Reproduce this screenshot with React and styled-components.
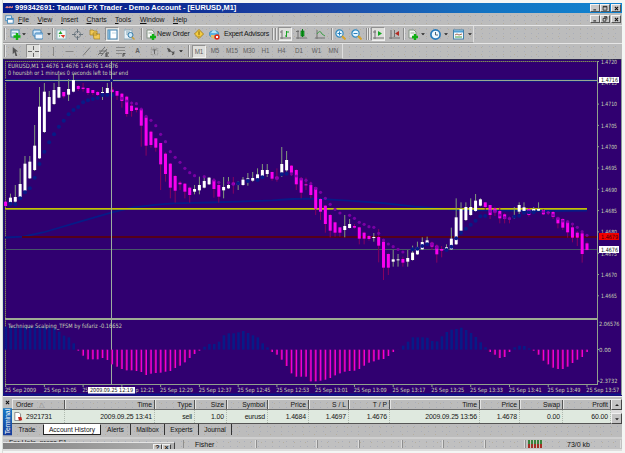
import React from 'react';
import styled, { createGlobalStyle, css } from 'styled-components';

const Global = createGlobalStyle`
  * { box-sizing: border-box; }
  body { margin: 0; background: #f4f6f4; font-family: "Liberation Sans", Arial, sans-serif; font-size: 7px; color: #141414; overflow: hidden; }
  svg { display: block; flex: none; }
`;

const Screen = styled.div`
  width: 625px; height: 453px; padding: 3px 3px 2px;
  background: linear-gradient(90deg, #f4f6f4 2px, #d8dcd8 2px, #d8dcd8 3px, #f4f6f4 3px);
`;
const Window = styled.div`
  width: 619px; height: 448px; display: flex; flex-direction: column; background: #bcbcbc; overflow: hidden;
`;
const dither = css`
  background-image: radial-gradient(circle, #a9adb9 0.6px, transparent 0.8px), radial-gradient(circle, #b5ae9e 0.6px, transparent 0.8px);
  background-size: 7px 5px, 11px 7px;
`;
const TitleBar = styled.header`
  height: 10px; display: flex; align-items: center; padding-left: 2px; flex: none;
  background: linear-gradient(90deg, #051c88 0%, #0c2a92 25%, #1f4aa8 52%, #1273c2 78%, #1084d0 100%);
  color: #fff; font-weight: bold; font-size: 7.4px; white-space: pre;
`;
const TitleText = styled.span`
  margin-left: 2px; line-height: 10px; letter-spacing: ${p => p.$ls}px;
`;
const WinButtons = styled.div`
  margin-left: auto; display: flex; padding-right: 1px;
`;
const WinButton = styled.span`
  width: 10px; height: 8px; margin-left: ${p => (p.$gap ? 1 : 0)}px; background: #c8c8c8; display: flex; align-items: center; justify-content: center;
  border: 1px solid; border-color: #f4f4f4 #555 #555 #f4f4f4;
`;
const MenuBar = styled.nav`
  height: 12px; display: flex; align-items: center; flex: none; padding-left: 2px; ${dither}
`;
const MenuItem = styled.span`
  width: ${p => p.$w}px; font-size: 6.9px; line-height: 11px;
  &::first-letter { text-decoration: underline; }
`;
const MenuLabels = styled.div`
  display: flex; margin-left: 4px;
`;
const Toolbar = styled.div`
  height: ${p => p.$h}px; flex: none; display: flex; align-items: center; border-top: 1px solid #e6e6e6; ${dither}
`;
const ToolGroup = styled.div`
  display: flex; align-items: center; height: 100%; border-right: 1px solid #dedede; border-bottom: 1px solid #9c9c9c;
`;
const Slot = styled.span`
  width: ${p => p.$w}px; height: 14px; flex: none; display: flex; align-items: center; justify-content: center;
  ${p => p.$pressed && css`background: #dededb; border: 1px solid; border-color: #929292 #f0f0f0 #f0f0f0 #929292;`}
`;
const Divider = styled.i`
  width: 2px; height: 12px; flex: none; margin: 0 ${p => p.$r || 0}px 0 ${p => p.$l || 0}px;
  border-left: 1px solid #8c8c8c; border-right: 1px solid #e4e4e4;
`;
const ToolLabel = styled.span`
  width: ${p => p.$w}px; flex: none; font-size: 7px; letter-spacing: ${p => p.$ls || 0}px; white-space: nowrap; line-height: 12px;
`;
const Period = styled.span`
  width: ${p => p.$w}px; height: 13px; flex: none; text-align: center; line-height: 12px; font-size: 6.3px; color: #606060;
  ${p => p.$pressed && css`background: #dededb; border: 1px solid; border-color: #929292 #f0f0f0 #f0f0f0 #929292; line-height: 11px;`}
`;
const ChartPane = styled.main`
  height: 337px; flex: none; background: #300070;
`;
const Terminal = styled.section`
  height: 39px; display: flex; flex: none; border-top: 1px solid #eee; background: #bcbcbc;
`;
const TerminalRail = styled.aside`
  width: 9px; display: flex; flex-direction: column; align-items: center; flex: none; padding-top: 2px;
`;
const RailTitle = styled.div`
  margin-top: 2px; width: 9px; flex: 1; color: #fff; font-size: 7px; line-height: 9px; writing-mode: vertical-rl; transform: rotate(180deg);
  background: linear-gradient(0deg, #1678c4, #163a98); padding: 1px 0; letter-spacing: -0.15px; white-space: nowrap;
`;
const Ledger = styled.div`
  flex: 1; display: flex; flex-direction: column; min-width: 0; padding-top: 2px;
`;
const TableBox = styled.div`
  display: flex; height: 25px; flex: none;
`;
const Rows = styled.div`
  width: 599px; flex: none;
`;
const cols = '53px 90px 40px 32px 41px 41px 40px 41px 90px 40px 43px 1fr';
const HeadRow = styled.div`
  display: grid; grid-template-columns: ${cols}; height: 11px; border-top: 1px solid #eee; border-bottom: 1px solid #707070;
`;
const HeadCell = styled.span`
  text-align: ${p => (p.$left ? 'left' : 'right')}; padding: 0 2px 0 3px; line-height: 9px; font-size: 6.8px; white-space: pre;
  border-right: 1px solid #555; border-left: 1px solid #e4e4e4; ${dither}
`;
const SortMark = styled.span`
  color: #8a8a8a; margin-left: 6px;
`;
const DataRow = styled.div`
  display: grid; grid-template-columns: ${cols}; height: 14px; background: #dfe9df; border-bottom: 1px solid #555;
`;
const DataCell = styled.span`
  display: flex; justify-content: ${p => (p.$left ? 'flex-start' : 'flex-end')}; align-items: center; gap: 3px;
  padding: 0 2px; border-right: 1px dotted #aeb8ae; font-size: 6.9px; letter-spacing: -0.12px; white-space: nowrap;
`;
const ScrollBar = styled.div`
  flex: 1; display: flex; flex-direction: column; background: #ddd; justify-content: space-between;
`;
const ScrollButton = styled.span`
  height: 11px; background: #c4c4c4; border: 1px solid; border-color: #f0f0f0 #444 #444 #f0f0f0; display: flex; align-items: center; justify-content: center;
`;
const Tabs = styled.div`
  height: 11px; display: flex; ${dither}
`;
const Tab = styled.span`
  width: ${p => p.$w}px; text-align: center; line-height: 11px; font-size: 6.6px; border-right: 1px solid ${p => (p.$bar ? '#333' : 'transparent')}; background-clip: padding-box;
  ${p => p.$active && css`background: #fff; border: 1px solid #222; border-top-color: #fff; line-height: 9px;`}
`;
const StatusBar = styled.footer`
  flex: 1; display: flex; margin-top: 2px; border-top: 2px solid #cfcfcf; background: #c0c0c0; border-bottom: 2px solid #dedede; overflow: hidden; ${dither}
`;
const HelpArea = styled.div`
  width: 172px; display: flex; flex-direction: column; overflow: hidden;
`;
const HelpText = styled.div`
  height: 3px; flex: none; overflow: hidden; padding-left: 6px; line-height: 8px; color: #222;
`;
const CoveringWindow = styled.div`
  flex: 1; min-height: 0; border-top: 1px solid #e4e4e4; border-right: 1px solid #444; display: flex; justify-content: flex-end;
  background: linear-gradient(90deg, #828282, #b0b0b0); padding: 1px 3px 0 0;
`;
const MiniButton = styled.span`
  width: 9px; height: 8px; background: #c4c4c4; border: 1px solid; border-color: #eee #444 #444 #eee; font-size: 7px; font-weight: bold; line-height: 6px; text-align: center;
`;
const StatusCell = styled.span`
  width: ${p => p.$w}px; padding-left: ${p => p.$pad || 0}px; flex: none; display: flex; align-items: center; margin: 1px 0; border-left: 1px solid #8e8e8e; border-right: 1px solid #dcdcdc; font-size: 7px; white-space: nowrap;
`;
const Traffic = styled.div`
  width: 15px; height: 8px; margin-right: 24px; background: repeating-linear-gradient(90deg, transparent 0 2px, #c5c5ba 2px 3px), linear-gradient(#37833a 0 45%, #a52d24 45%);
`;

const art = {
  newChart: <><rect x="1" y="1" width="8" height="7" fill="#e7f1f8" stroke="#4a86a8" /><path d="M2 4h5" stroke="#79a7c5" /><path d="M7 4v7M3.5 7.5h7" stroke="#13b313" strokeWidth="2.4" /></>,
  profiles: <><rect x="1" y="1" width="8" height="6" rx="1" fill="#d6eafa" stroke="#3f82b8" /><rect x="3" y="4" width="8" height="6" rx="1" fill="#eef7ff" stroke="#3f82b8" /><path d="M3.5 5h7" stroke="#4d95d0" /></>,
  market: <><rect x="1" y="1" width="9" height="9" fill="#f2f8f8" stroke="#90b8c0" /><path d="M2.5 5l2-3 2 3z" fill="#1ba526" /><path d="M4.5 6l3 3 1.5-3z" fill="#db3b25" /><path d="M3 7h1" stroke="#1ba526" /></>,
  data: <><circle cx="5.5" cy="5.5" r="3.2" fill="none" stroke="#7b858c" /><path d="M5.5 0v4M5.5 7v4M0 5.5h4M7 5.5h4" stroke="#68747c" /></>,
  navigator: <path d="M1 1h3l1 1h3v4H1zM4 4h3l1 1h3v5H5z" fill="#f0c957" stroke="#a27d1c" strokeWidth=".7" />,
  terminal: <><rect x="1" y="1" width="9" height="9" fill="#fff" stroke="#3c7fae" /><path d="M2.5 1v9" stroke="#63a4cf" strokeWidth="2" /><path d="M5 4h4" stroke="#bdd6e4" /></>,
  tester: <><rect x="0" y="1" width="8" height="9" fill="#e8f1f6" stroke="#90abba" /><path d="M2 3h4M2 5h3" stroke="#85a6b8" /><circle cx="6.5" cy="6" r="2.5" fill="#cbe8fa" stroke="#357aa6" /><path d="M8 8l2.5 2.5" stroke="#caa039" strokeWidth="1.5" /></>,
  order: <><path d="M1 1h5l2 2v6H1z" fill="#f4f7f4" stroke="#849384" /><path d="M2.5 4h4" stroke="#95a995" /><path d="M7 5v6M4 8h6" stroke="#0faf13" strokeWidth="2.4" /></>,
  alert: <><path d="M5.5 0.5l5 5-5 5-5-5z" fill="#f3cc42" stroke="#a67e16" /><path d="M5.5 2.5v4M5.5 7.5v1" stroke="#705200" /></>,
  expert: <><ellipse cx="5" cy="5" rx="4.7" ry="3.2" fill="#5ab2e2" stroke="#2b7aad" strokeWidth=".6" /><path d="M2 4q3-6 6 0z" fill="#b6e4f8" /><path d="M2 6h4l-1 4-3-2z" fill="#e7be62" /><circle cx="8" cy="8" r="2.7" fill="#dc2b18" /><rect x="7" y="7" width="2" height="2" fill="#fff" /></>,
  bars: <><path d="M2 1v9M0 3h2M0 9h11" stroke="#707070" /><path d="M6.5 2v6M5 7h2M7 3h2" stroke="#16a422" /></>,
  candle: <><path d="M2 1v9M0 2.5h3M0 9h11" stroke="#707070" /><rect x="5" y="2" width="3" height="5" fill="#14b523" stroke="#087515" strokeWidth=".7" /><path d="M6.5 0v8" stroke="#087515" /></>,
  line: <><path d="M2 1v9M0 9h10" stroke="#707070" /><path d="M2 5q3-5 5 0l3 2" fill="none" stroke="#3f9d48" /></>,
  zoomIn: <><circle cx="4.5" cy="4.5" r="3.6" fill="#e7f6ff" stroke="#318ac0" strokeWidth="1.2" /><path d="M7 7l3.5 3.5" stroke="#d8a22b" strokeWidth="2" /><path d="M2.5 4.5h4M4.5 2.5v4" stroke="#2680bd" /></>,
  zoomOut: <><circle cx="4.5" cy="4.5" r="3.6" fill="#e7f6ff" stroke="#318ac0" strokeWidth="1.2" /><path d="M7 7l3.5 3.5" stroke="#d8a22b" strokeWidth="2" /><path d="M2.5 4.5h4" stroke="#2680bd" /></>,
  scroll: <><path d="M2 1v9M0 9h11M0 3h3" stroke="#707070" /><path d="M5 2l4 2.5L5 7z" fill="#11a720" /></>,
  shift: <><path d="M2 1v9M0 9h11M5.5 1v7" stroke="#707070" /><path d="M10 2L6 4.5 10 7z" fill="#b12a22" /></>,
  clock: <><circle cx="5.5" cy="5.5" r="4.6" fill="#eef8ff" stroke="#267abb" strokeWidth="1.7" /><path d="M5.5 3v3H8" fill="none" stroke="#506674" /></>,
  template: <><rect x=".5" y="1" width="10" height="9" fill="#f5faff" stroke="#4480a9" /><path d="M1 2.5h9" stroke="#4fa0d5" strokeWidth="2" /><path d="M2 6l2-1 2 1 3-1" fill="none" stroke="#a66e52" /><path d="M2 8h7" stroke="#40a040" /></>,
  cursor: <path d="M3 1v8l2-2 1 4h2L6.5 6H9z" fill="#555" />,
  cross: <path d="M5.5 0v4M5.5 7v4M0 5.5h4M7 5.5h4" stroke="#666" />,
  vline: <path d="M5.5 1v9" stroke="#888" />,
  hline: <path d="M1.5 5.5h8" stroke="#888" />,
  trend: <path d="M2 9.5l7-8" stroke="#777" />,
  channel: <><path d="M0 9l7-8M3 10l6-7M1 5h8M1 7.5h4" stroke="#666" strokeWidth=".9" /><path d="M11 7H8v4h3M8 9h2" fill="none" stroke="#444" /></>,
  fibo: <><path d="M1 1.5h9M1 4.5h9M1 7.5h6" stroke="#888" /><path d="M10.5 7.5H8V11M8 9h2" fill="none" stroke="#555" /></>,
  textBox: <><rect x="1.5" y="1.5" width="8" height="8" fill="none" stroke="#888" strokeDasharray="1 1" /><path d="M3 3.5h5M5.5 3.5v5" stroke="#555" /></>,
  arrows: <><path d="M1 2l3 1 2 3-3 1z" fill="#555" /><path d="M6 6l3 3M9 6L7 10" stroke="#555" strokeWidth="1.3" /></>,
  windows: <><rect x="1" y="1" width="7" height="6" fill="#f7fbff" stroke="#3282bc" /><rect x="3" y="4" width="7" height="6" fill="#fff" stroke="#3282bc" /><path d="M3 5h7" stroke="#3282bc" strokeWidth="1.5" /></>,
  history: <><path d="M1 .5h5l2 2v8H1z" fill="#fff" stroke="#777" /><path d="M5 6h4l1 4-4 .5z" fill="#c4261e" /></>,
  brand: <path d="M0 5l2-2h2l1 1 1-1h2l1 1 2-2v3L9 6 8 5 6 6 5 5 3 6z" fill="#e08080" />,
  close: <path d="M3 3l5 5M8 3l-5 5" stroke="#111" strokeWidth="1.7" />,
  min: <path d="M2.5 9h5" stroke="#111" strokeWidth="1.8" />,
  max: <path d="M2 2.5h7v7H2zM2 3.5h7" fill="none" stroke="#111" strokeWidth="1.3" />,
  restore: <path d="M4 1.5h5v5M4 2h5M2 4.5h5v5H2z" fill="none" stroke="#111" strokeWidth="1.3" />,
  down: <path d="M2 4h7L5.5 8z" fill="#222" />,
  up: <path d="M2 7.5h7L5.5 3.5z" fill="#222" />,
};
const Icon = ({ name, size = 11 }) => <svg width={size} height={size} viewBox="0 0 11 11">{art[name]}</svg>;
const Tool = ({ name, w, pressed, size }) => <Slot $w={w} $pressed={pressed}><Icon name={name} size={size} /></Slot>;
const Drop = ({ w = 8 }) => <Slot $w={w}><Icon name="down" size={6} /></Slot>;

const STEP = 4.845;
const bx = i => 5.6 + i * STEP;
const py = v => 75 + v / 3;

// Each candle: direction, high, body top, body bottom, low (thirds of a pixel below y = 75).
const candles = `m380,380,393,393 w356,368,384,384 w330,366,380,384 w280,327,366,370 w243,266,347,350 w243,260,310,312 w150,212,285,288 w36,95,250,252 w24,50,171,174 w48,66,110,110 w24,45,87,90 w0,36,68,70 m51,51,64,70 w12,42,59,78 w-3,15,50,52 m30,33,42,48 m24,38,42,50 m39,39,54,60 m45,45,54,60 m48,51,60,63 w36,51,54,75 w24,39,54,56 m36,44,51,60 m48,48,62,75 m54,56,78,98 m62,65,117,125 m80,92,108,125 m98,98,105,112 m99,102,152,215 m120,127,212,242 m167,170,210,218 m190,190,218,230 m204,204,268,345 m232,236,297,320 m264,266,338,370 m300,303,347,383 m318,323,328,345 m324,326,350,370 m335,338,360,383 w330,342,350,358 w305,330,346,358 w305,318,338,340 w306,308,328,330 m310,315,342,368 m318,330,365,383 w306,336,346,370 w306,330,340,342 m306,323,330,356 w318,325,327,345 w306,314,330,332 w294,310,313,332 w291,309,317,320 w280,298,311,314 w267,285,303,306 w267,285,297,306 m290,291,311,317 m280,305,313,320 w216,267,293,306 w228,255,286,290 m270,272,293,303 m283,285,328,345 m306,310,353,370 m308,328,331,345 m320,330,360,370 m335,337,402,420 m370,372,410,435 m390,392,447,473 m417,420,467,487 m440,442,473,485 m457,457,473,485 w420,453,465,487 w432,447,459,460 m447,453,458,461 m455,457,491,508 m470,473,491,508 m480,483,492,497 w474,486,489,500 m462,486,512,562 m495,500,578,615 m535,537,578,600 w525,553,560,575 w537,553,556,575 m545,552,563,575 w525,549,560,575 w512,533,555,557 w500,517,538,540 w487,501,523,525 w485,496,505,507 m500,503,515,525 m508,512,538,563 m513,522,527,547 w508,517,525,527 w458,491,523,525 w370,427,508,510 w382,402,467,468 w382,396,435,438 w370,396,420,422 w357,377,408,410 w370,373,392,394 m382,382,396,405 m390,390,420,432 m396,400,412,423 m396,408,430,445 m415,418,432,445 m425,430,431,445 w396,424,427,432 w382,390,410,426 w382,397,408,410 m400,402,420,425 w396,402,408,410 w382,402,407,408 m403,405,418,420 m408,411,414,420 m408,411,426,432 m425,428,445,460 m430,432,458,465 m436,440,472,488 m450,457,488,502 m468,473,488,513 m470,475,537,563 m500,505,525,526`
  .split(' ').map(s => [s[0], ...s.slice(1).split(',').map(Number)]);

// Trailing average dots as [first index, colour, levels].
const dots = [
  [1, 'b', [386, 388, 370, 352, 340, 308, 267, 230, 202, 178, 155, 137, 118, 105, 96, 82, 76, 72, 69, 60, 60, 60]],
  [24, 'p', [70, 78, 84, 86, 102, 124, 136, 152, 178, 200, 230, 247, 262, 280, 293, 302, null, 305, null, 315, 322, null, 323, 328]],
  [48, 'b', [325, null, 318, null, 315, 307]], [56, 'p', [310]], [57, 'b', [298, 296]],
  [59, 'p', [297, 303, 312, 316, 326, 340, 352, 370, 388, 403, 414, null, 421, 430, 442, 448, 455, 457, 475, 495, 507, 515, 523, 531]],
  [84, 'b', [523, 521, 513, 508]], [88, 'p', [508, 517]], [91, 'b', [525, 515, 490, 473, 461, 449, 437, 424, 423]],
  [100, 'p', [409, 410, 420, 428, 430]], [105, 'b', [425, 422, 413, 412, 412]],
  [111, 'p', [410, 413, 420, 430, 438, 440, 447, 457, 470, 481]],
];
const histogram = [290, 290, 290, 290, 290, 290, 290, 290, 290, 290, 293, 305, 317, 322, 340, 362, 377, 388, 388, 388, 384, 390, 403, 410, 417, 421, 421, 423, 426, 435, 431, 429, 428, 425, 423, 414, 407, 397, 384, 372, 362, 350, 342, 342, 335, 316, 310, 310, 307, 303, 309, 316, 322, 340, 352, 366, 374, 389, 408, 430, 440, 440, 440, 454, 454, 452, 449, 444, 436, 430, 425, 423, 422, 417, 407, 398, 394, 389, 387, 378, 366, 359, 347, 335, 322, 322, 322, 323, 333, 334, 319, 306, 299, 297, 293, 300, 309, 321, 337, 352, 366, 374, 384, 381, 366, 352, 347, 348, 355, 362, 374, 392, 403, 413, 417, 417, 410, 399, 389, 381, 366];
const times = ['2009', '12:05', '12:13', '12:21', '12:29', '12:37', '12:45', '12:53', '13:01', '13:09', '13:17', '13:25', '13:33', '13:41', '13:49', '13:57'];
const prices = ['1.4720', '1.4715', '1.4710', '1.4705', '1.4700', '1.4695', '1.4690', '1.4685', '1.4680', '1.4675', '1.4670', '1.4665'];

// The crosshair date box leaves only the ends of its two neighbouring labels visible.
const timeLabel = (t, i) => {
  const x = 5 + i * 38.75;
  if (i === 2) return { x, w: 5.5, text: '25' };
  if (i === 3) return { x: 135.5, w: 18.7, text: 'p 12:21' };
  return { x, w: i ? 33 : 31, text: `25 Sep ${t}` };
};

const ChartText = styled.text`
  font-family: "DejaVu Sans Condensed", "DejaVu Sans", sans-serif; font-size: ${p => p.$size || 5.7}px; fill: ${p => p.$fill || '#c8d6b6'};
`;
const Label = ({ x, y, w, children, fill, size }) => (
  <ChartText x={x} y={y} textLength={w} lengthAdjust="spacingAndGlyphs" $fill={fill} $size={size}>{children}</ChartText>
);

function Chart() {
  return (
    <svg width="619" height="337" viewBox="3 59 619 337">
      <rect x="3" y="59" width="619" height="337" fill="#300070" />
      <path d="M3 59.5h619" stroke="#2c254d" />
      <path d="M3.5 59v336" stroke="#171b73" />
      <path d="M3 394.5h619" stroke="#0a1788" strokeWidth="2" />
      <path d="M5 61.5h592M5.5 61v324" stroke="#7e8b58" strokeDasharray="1.5 .5" />
      <path d="M621.5 59v336" stroke="#8b9899" />
      <path d="M5 79.5h592M5 81.5h592" stroke="#16187f" />
      <path d="M5 80.5h592" stroke="#99aa91" />
      <path d="M5 249.5h592" stroke="#465868" />
      <polyline fill="none" stroke="#071b87" strokeWidth="1.8" points="5,237.5 23,236.7 43,232.5 80,221.7 112,212.3 133,207.3 160,204.3 173,203.3 210,202.5 238,201.7 272,200.3 292,199 315,198.7 348,200.7 382,203 415,206.7 460,210 540,211 587,210.7" />
      <path d="M5 208.5h582" stroke="#c6c100" />
      <path d="M5 209.5h582" stroke="#8a9530" />
      <path d="M22 237h575" stroke="#55001a" strokeWidth="2" />
      {candles.map(([d, h, t, b, l], i) => (
        <React.Fragment key={i}>
          <path d={`M${bx(i)} ${py(h)}V${py(l)}`} stroke={d === 'w' ? '#829a7c' : '#870061'} strokeWidth="1" />
          <rect x={bx(i) - 1.5} y={py(t)} width="3" height={Math.max(1, (b - t) / 3)} fill={d === 'w' ? '#fff' : '#fa00ef'} />
        </React.Fragment>
      ))}
      {dots.flatMap(([start, c, ys]) => ys.map((y, i) => y !== null && (
        <circle key={`${start}-${i}`} cx={bx(start + i)} cy={py(y)} r={c === 'b' ? 2 : 1.6} fill={c === 'b' ? '#071b87' : '#8200aa'} opacity={c === 'b' ? 1 : 0.9} />
      )))}
      <path d="M111.5 61v324" stroke="#9caea0" />
      <rect x="110" y="79" width="3" height="3" fill="#1a1a80" />
      <path d="M5 319h592" stroke="#9eac94" strokeWidth="2" />
      <path d="M5.5 327v22" stroke="#3d4fd0" />
      {histogram.map((v, i) => {
        const y = 230 + v / 3;
        const up = v < 359;
        return <React.Fragment key={i}>
          <rect x={bx(i) - (up ? 1 : 0.9)} y={up ? y : 349.7} width={up ? 2.6 : 1.8} height={Math.abs(y - 349.7)} fill={up ? '#071b87' : '#ee00d9'} />
          {!up && <path d={`M${bx(i) - 1} 349.7V${y}`} stroke="#820048" strokeWidth=".7" />}
        </React.Fragment>;
      })}
      <path d="M597.5 61v324M5 384.5h592" stroke="#91a18c" />
      {times.map((t, i) => {
        const { x, w, text } = timeLabel(t, i);
        return <React.Fragment key={t}>
          <path d={`M${bx(i * 8)} 384v3`} stroke="#91a18c" />
          <Label x={x} y="391.8" w={w}>{text}</Label>
        </React.Fragment>;
      })}
      {prices.map((p, i) => (
        <React.Fragment key={p}>
          <path d={`M597 ${61.5 + i * 21.3}h2`} stroke="#91a18c" />
          <Label x="601" y={63.8 + i * 21.3} w="16">{p}</Label>
        </React.Fragment>
      ))}
      <rect x="599" y="77" width="20" height="6" fill="#fff" />
      <Label x="601" y="82" w="17" fill="#111">1.4716</Label>
      <rect x="599" y="233" width="20" height="7" fill="#f40000" />
      <Label x="601" y="238.8" w="17" fill="#310000">1.4679</Label>
      <rect x="599" y="246" width="20" height="7" fill="#fff" />
      <Label x="601" y="251.8" w="17" fill="#111">1.4676</Label>
      <path d="M597 349.5h2M597 381h2" stroke="#91a18c" />
      <Label x="599" y="326" w="20.5">2.06576</Label>
      <Label x="599" y="351.7" w="12">0.00</Label>
      <Label x="598" y="382.5" w="19.5">-2.3732</Label>
      <Label x="8" y="68" w="110" size="6">EURUSD,M1  1.4676 1.4676 1.4676 1.4676</Label>
      <Label x="8" y="74.5" w="120" size="6">0 hoursbh or 1 minutes 0 seconds left to bar end</Label>
      <Label x="8" y="327.7" w="114" size="6">Technique Scalping_TFSM by fsfariz -0.16652</Label>
      <rect x="88" y="387" width="47" height="6.5" fill="#fff" />
      <Label x="90" y="392.2" w="43" fill="#111">2009.09.25 12:19</Label>
    </svg>
  );
}

const heads = ['Order', 'Time', 'Type', 'Size', 'Symbol', 'Price', 'S / L', 'T / P', 'Time', 'Price', 'Swap', 'Profit'];
const trade = ['2921731', '2009.09.25 13:41', 'sell', '1.00', 'eurusd', '1.4684', '1.4697', '1.4676', '2009.09.25 13:56', '1.4678', '0.00', '60.00'];
const menus = [['File', 19.5], ['View', 23.5], ['Insert', 25.5], ['Charts', 28.5], ['Tools', 25], ['Window', 33], ['Help', 24]];
const periods = [['M5', 18], ['M15', 16], ['M30', 18], ['H1', 15], ['H4', 17], ['D1', 18], ['W1', 17], ['MN', 17]];

export default function App() {
  return (
    <Screen>
      <Global />
      <Window>
        <TitleBar>
          <Icon name="brand" size={8} />
          <TitleText $ls={0.02}>999342691: Tadawul FX Trader - Demo Account - [EURUSD,M1]</TitleText>
          <WinButtons>
            <WinButton><Icon name="min" size={6} /></WinButton><WinButton><Icon name="max" size={6} /></WinButton><WinButton $gap><Icon name="close" size={7} /></WinButton>
          </WinButtons>
        </TitleBar>
        <MenuBar>
          <Icon name="windows" size={9} />
          <MenuLabels>{menus.map(([m, w]) => <MenuItem key={m} $w={w}>{m}</MenuItem>)}</MenuLabels>
          <WinButtons>
            <WinButton><Icon name="min" size={6} /></WinButton><WinButton><Icon name="restore" size={6} /></WinButton><WinButton $gap><Icon name="close" size={7} /></WinButton>
          </WinButtons>
        </MenuBar>
        <Toolbar $h={18}>
          <ToolGroup>
            <Divider $l={1} $r={3} />
            <Tool name="newChart" w={12} /><Drop w={6} />
            <Tool name="profiles" w={20} /><Drop w={4} />
            <Divider $l={1} $r={1} />
            <Tool name="market" w={12} /><Tool name="data" w={20} /><Tool name="navigator" w={15} />
            <Slot $w={3} /><Tool name="terminal" w={14} pressed /><Tool name="tester" w={20} />
            <Divider $l={2} $r={2} />
            <Tool name="order" w={12} /><ToolLabel $w={35} $ls={-0.12}>New Order</ToolLabel>
            <Tool name="alert" w={13} size={10} /><Tool name="expert" w={19} />
            <ToolLabel $w={47} $ls={-0.25}>Expert Advisors</ToolLabel>
            <Divider $l={1} /><Divider $l={1} $r={1} />
            <Tool name="bars" w={14} pressed /><Tool name="candle" w={19} /><Tool name="line" w={18} />
            <Divider $l={2} $r={1} />
            <Tool name="zoomIn" w={13} /><Tool name="zoomOut" w={19} />
            <Divider /><Divider $r={1} />
            <Tool name="scroll" w={14} pressed /><Tool name="shift" w={18} />
            <Divider $r={3} />
            <Tool name="order" w={11} /><Drop w={7} />
            <Tool name="clock" w={18} /><Drop w={4} />
            <Tool name="template" w={20} /><Drop w={3} />
            <Slot $w={2} />
          </ToolGroup>
        </Toolbar>
        <Toolbar $h={16}>
          <ToolGroup>
            <Divider $l={1} $r={2} />
            <Tool name="cursor" w={14} size={10} /><Slot $w={4} />
            <Tool name="cross" w={14} pressed /><Slot $w={5} />
            <Tool name="vline" w={16} /><Tool name="hline" w={17} /><Tool name="trend" w={17} />
            <Tool name="channel" w={17} /><Tool name="fibo" w={17} />
            <Period $w={17}><b>A</b></Period><Tool name="textBox" w={17} size={9} />
            <Tool name="arrows" w={16} size={10} /><Drop w={4} />
            <Divider $l={5} $r={2} />
            <Period $w={14} $pressed>M1</Period>
            {periods.map(([p, w]) => <Period key={p} $w={w}>{p}</Period>)}
          </ToolGroup>
        </Toolbar>
        <ChartPane><Chart /></ChartPane>
        <Terminal>
          <TerminalRail><Icon name="close" size={7} /><RailTitle>Terminal</RailTitle></TerminalRail>
          <Ledger>
            <TableBox>
              <Rows>
                <HeadRow>{heads.map((h, i) => <HeadCell key={i} $left={!i}>{h}{!i && <SortMark>△</SortMark>}</HeadCell>)}</HeadRow>
                <DataRow>{trade.map((v, i) => <DataCell key={i} $left={!i}>{!i && <Icon name="history" size={9} />}{v}</DataCell>)}</DataRow>
              </Rows>
              <ScrollBar><ScrollButton><Icon name="up" size={6} /></ScrollButton><ScrollButton><Icon name="down" size={6} /></ScrollButton></ScrollBar>
            </TableBox>
            <Tabs>
              <Tab $w={31}>Trade</Tab><Tab $w={58} $active>Account History</Tab><Tab $w={30} $bar>Alerts</Tab>
              <Tab $w={34} $bar>Mailbox</Tab><Tab $w={34} $bar>Experts</Tab><Tab $w={33} $bar>Journal</Tab>
            </Tabs>
          </Ledger>
        </Terminal>
        <StatusBar>
          <HelpArea>
            <HelpText>For Help, press F1</HelpText>
            <CoveringWindow><MiniButton>?</MiniButton><MiniButton>×</MiniButton></CoveringWindow>
          </HelpArea>
          <Slot $w={8} />
          <StatusCell $w={73} $pad={11}>Fisher</StatusCell><StatusCell $w={61} /><StatusCell $w={42} />
          <StatusCell $w={43} /><StatusCell $w={41} /><StatusCell $w={42} /><StatusCell $w={40} />
          <StatusCell $w={96} $pad={2}><Traffic />73/0 kb</StatusCell>
        </StatusBar>
      </Window>
    </Screen>
  );
}
